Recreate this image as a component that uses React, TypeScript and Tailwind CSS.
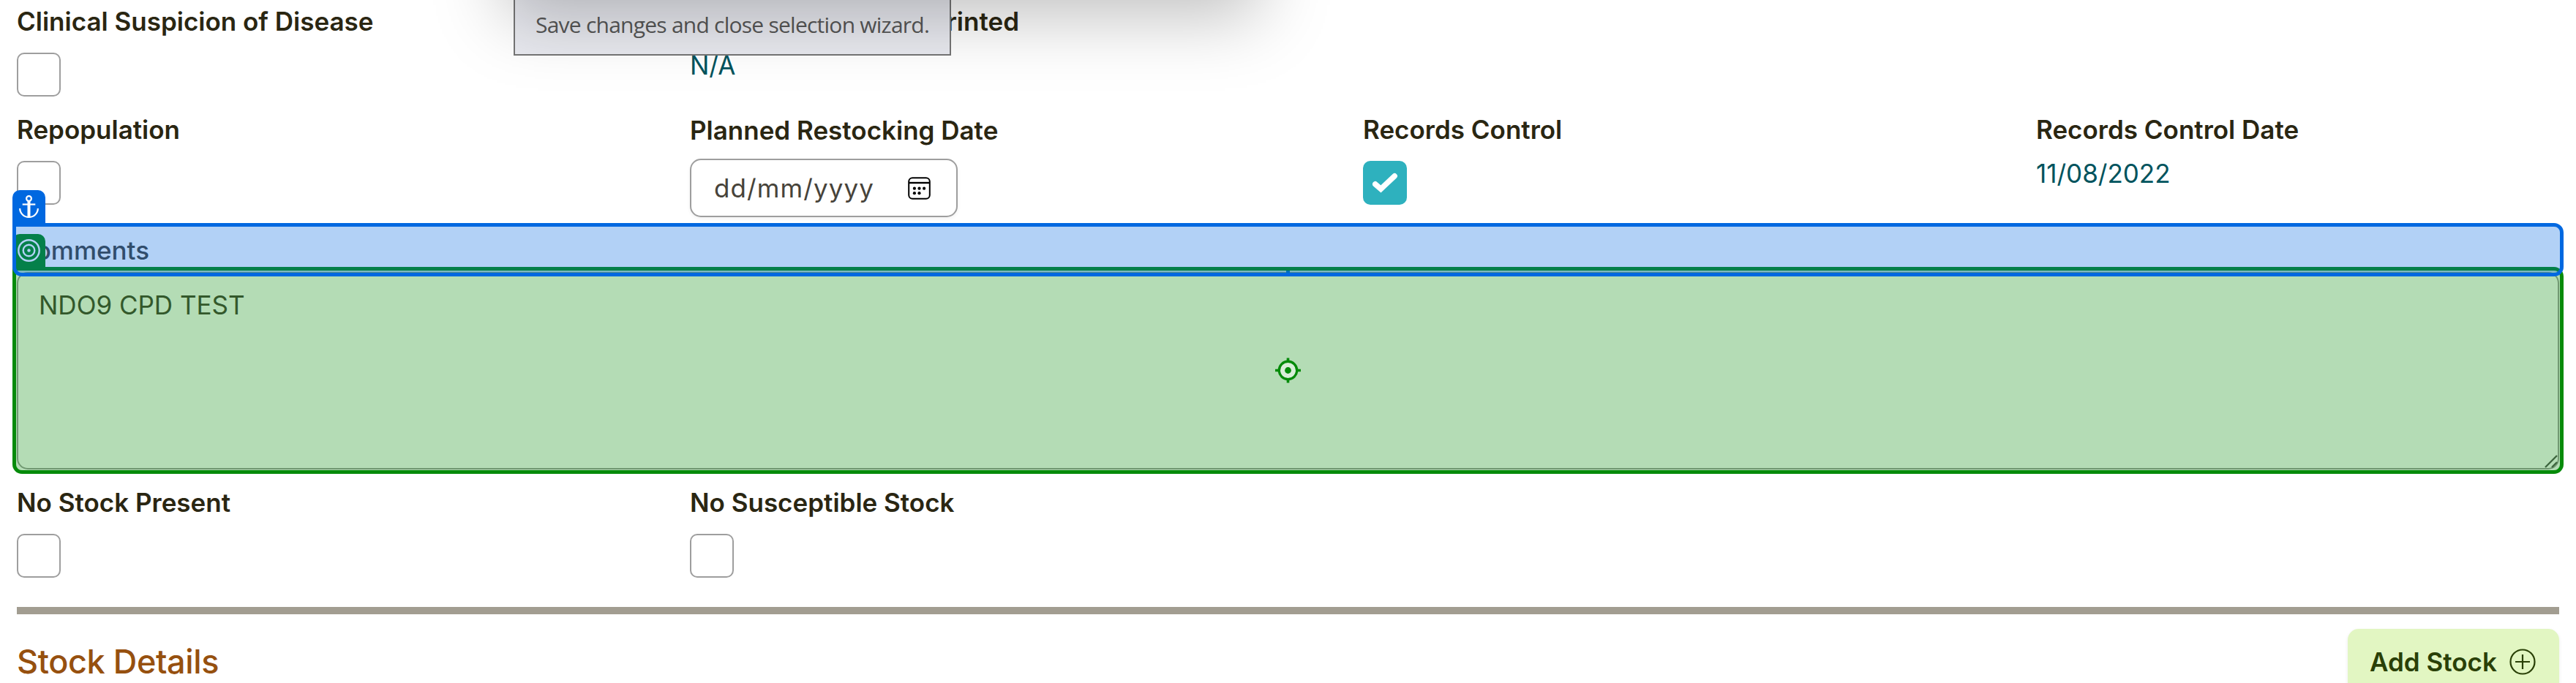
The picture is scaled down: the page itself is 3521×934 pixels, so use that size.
import React from "react";

type FieldProps = { label: string; children?: React.ReactNode; nudge?: boolean; alignEnd?: boolean };

function Field({ label, children, nudge, alignEnd }: FieldProps) {
  return (
    <div className="w-[920px] shrink-0">
      <div className={nudge ? "mt-px h-[42px]" : "h-[43px]"}>
        <span
          className={
            alignEnd
              ? "block w-[450px] text-right text-[35px] leading-[42px] font-semibold whitespace-nowrap text-[#2a2612]"
              : "block text-[35px] leading-[42px] font-semibold whitespace-nowrap text-[#2a2612]"
          }
        >
          {label}
        </span>
      </div>
      {children}
    </div>
  );
}

function Checkbox({ checked = false }: { checked?: boolean }) {
  if (checked) {
    return (
      <div className="mt-[21px] flex size-[60px] items-center justify-center rounded-[10px] bg-[#2eb1be]">
        <svg width="60" height="60" viewBox="0 0 60 60" fill="none" stroke="#fff" strokeWidth="7.5" strokeLinecap="round" strokeLinejoin="miter">
          <path d="M16.8 31.8 24.4 38.4 43.2 20.7" />
        </svg>
      </div>
    );
  }
  return <div className="mt-[21px] size-[60px] rounded-[10px] border-2 border-[#9e9e9e] bg-white" />;
}

function Value({ children }: { children: React.ReactNode }) {
  return <div className="mt-[17px] text-[35px] leading-[42px] text-[#00535d]">{children}</div>;
}

function DateInput() {
  return (
    <div className="mt-[18px] flex h-20 w-[366px] items-center justify-between rounded-[15px] border-2 border-[#9e9e9e] bg-white pr-[35px] pl-[31px] shadow-[0_2px_5px_rgba(0,0,0,0.06)]">
      <span className="text-[35px] leading-[42px] tracking-[1.1px] text-[#47433a]">dd/mm/yyyy</span>
      <svg width="31" height="31" viewBox="0 0 31 31" fill="none" stroke="#000" strokeWidth="2">
        <rect x="1.2" y="1.2" width="28.6" height="28.6" rx="5" />
        <path d="M1.2 8h28.6" strokeWidth="2.4" />
        <g fill="#000" stroke="none">
          <circle cx="8.9" cy="15.7" r="2.1" />
          <circle cx="15.5" cy="15.7" r="2.1" />
          <circle cx="22.1" cy="15.7" r="2.1" />
          <circle cx="8.9" cy="22.2" r="2.1" />
          <circle cx="15.5" cy="22.2" r="2.1" />
        </g>
      </svg>
    </div>
  );
}

function TargetBadge() {
  return (
    <div className="absolute top-[320px] left-[17px] size-[45px] rounded-t-[10px] bg-[#068b0a]">
      <svg width="45" height="45" viewBox="0 0 45 45" fill="none" stroke="#fff" strokeWidth="2.4">
        <circle cx="22.5" cy="22.5" r="14.2" />
        <circle cx="22.5" cy="22.5" r="7.8" />
        <circle cx="22.5" cy="22.5" r="2.2" fill="#fff" stroke="none" />
      </svg>
    </div>
  );
}

function AnchorBadge() {
  return (
    <div className="absolute top-[260px] left-[17px] size-[45px] rounded-t-[10px] bg-[#0068e0]">
      <svg width="45" height="45" viewBox="0 0 45 45" fill="none" stroke="#fff" strokeWidth="2.2">
        <circle cx="22.5" cy="11.5" r="3.4" />
        <path d="M22.5 15v22" strokeWidth="4" />
        <path d="M13.7 19.5h17.6" />
        <path d="M10.2 25a12.3 12 0 0 0 24.6 0" />
      </svg>
    </div>
  );
}

function Crosshair() {
  return (
    <svg className="absolute top-[489px] left-[1743px]" width="35" height="35" viewBox="0 0 35 35">
      <circle cx="17.5" cy="17.5" r="12.2" fill="#d9eed9" stroke="#068b0a" strokeWidth="3.4" />
      <circle cx="17.5" cy="17.5" r="4.4" fill="#068b0a" />
      <path d="M17.5 0.5v4M17.5 30.5v4M0 17.5h4M31 17.5h4" stroke="#068b0a" strokeWidth="3.6" />
    </svg>
  );
}

export default function App() {
  return (
    <div className="relative h-[934px] w-[3521px] overflow-hidden bg-white font-[Inter,sans-serif]">
      <main className="flex h-full flex-col px-[23px]">
        <div className="flex h-[148px] shrink-0 pt-2">
          <Field label="Clinical Suspicion of Disease">
            <Checkbox />
          </Field>
          <Field label="Printed" alignEnd>
            <Value>N/A</Value>
          </Field>
        </div>
        <div className="flex h-[173px] shrink-0 pt-2">
          <Field label="Repopulation">
            <Checkbox />
          </Field>
          <Field label="Planned Restocking Date" nudge>
            <DateInput />
          </Field>
          <Field label="Records Control">
            <Checkbox checked />
          </Field>
          <Field label="Records Control Date">
            <Value>11/08/2022</Value>
          </Field>
        </div>
        <div className="h-[51px] shrink-0 text-[35px] leading-[42px] font-medium text-[#47433a]">Comments</div>
        <div className="relative h-[270px] w-[3475px] shrink-0 rounded-[15px] border-[2.5px] border-[#9e9e9e] bg-white px-[28px] pt-[22px] text-[35px] leading-[42px] text-[#47433a]">
          NDO9 CPD TEST
          <svg className="absolute right-0 bottom-0" width="19" height="19" viewBox="0 0 19 19" stroke="#555" strokeWidth="2.4">
            <path d="M2 18 18 2M11 18 18 11" />
          </svg>
        </div>
        <div className="flex h-[188px] shrink-0 pt-6">
          <Field label="No Stock Present">
            <Checkbox />
          </Field>
          <Field label="No Susceptible Stock">
            <Checkbox />
          </Field>
        </div>
        <div className="h-[10px] shrink-0 bg-[#a29d91]" />
        <div className="mt-5 flex h-[90px] shrink-0 items-center justify-between">
          <h2 className="text-[45px] leading-[54px] font-medium tracking-[-0.4px] text-[#96500f]">Stock Details</h2>
          <button className="flex h-[90px] w-[289px] items-center gap-[17px] rounded-[15px] bg-[#e2f6c2] pl-[30px] text-[35px] leading-[42px] font-semibold whitespace-nowrap text-[#2a4007] shadow-[0_2px_5px_rgba(0,0,0,0.08)]">
            Add Stock
            <svg width="36" height="36" viewBox="0 0 36 36" fill="none" stroke="#2a4007" strokeWidth="2.2">
              <circle cx="18" cy="18" r="16.5" />
              <path d="M18 8v20M8 18h20" />
            </svg>
          </button>
        </div>
      </main>

      <div className="absolute top-[365px] left-[17px] h-[283px] w-[3487px] rounded-b-[13px] rounded-tr-[13px] border-5 border-[#068b0a] bg-[#068b0a]/30 bg-clip-padding" />
      <TargetBadge />
      <Crosshair />
      <div className="absolute top-[305px] left-[17px] h-[73px] w-[3487px] rounded-b-[13px] rounded-tr-[13px] border-5 border-[#0068e0] bg-[#0068e0]/30 bg-clip-padding" />
      <div className="absolute top-[370px] left-[1758px] h-[3px] w-[5px] bg-[#0070b8]" />
      <AnchorBadge />

      <div className="absolute top-[-20px] left-[702px] h-[96px] w-[598px] border-2 border-[#767676] bg-[#e9eaf0] pt-[31px] pl-[28px] font-['Open_Sans',sans-serif] text-[30px] leading-[42px] whitespace-nowrap text-[#575757]">
        <span className="tracking-[-0.76px]">Save changes and close selection wizard.</span>
      </div>
      <div className="absolute top-[-600px] left-[690px] h-[580px] w-[1030px] shadow-[0_42px_90px_rgba(0,0,0,0.25)]" />
    </div>
  );
}
